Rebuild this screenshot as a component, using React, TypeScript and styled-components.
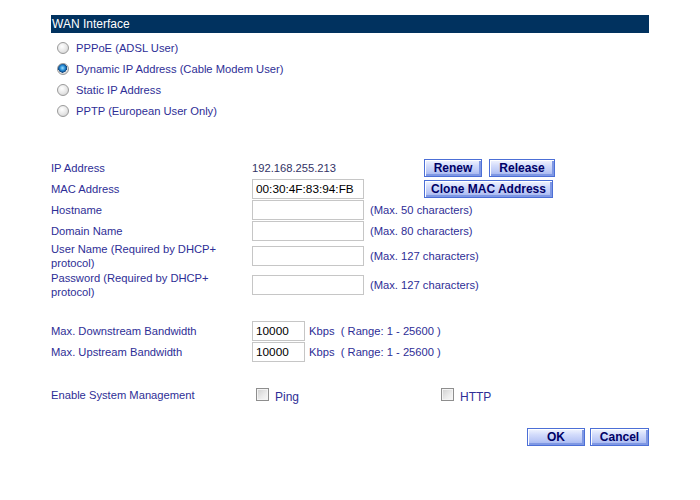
import React from 'react'
import styled, {createGlobalStyle} from 'styled-components'

const GlobalL = createGlobalStyle`
  body {
    margin: 0;
    background: #ffffff;
    font-family: "Liberation Sans", Arial, sans-serif;
    font-size: 11.2px;
    color: #2e2e96;
  }
`

const wanTypes = [
    {label: 'PPPoE (ADSL User)', checked: false},
    {label: 'Dynamic IP Address (Cable Modem User)', checked: true},
    {label: 'Static IP Address', checked: false},
    {label: 'PPTP (European User Only)', checked: false},
]

const textFields = [
    {label: 'Hostname', hint: '(Max. 50 characters)', tall: false},
    {label: 'Domain Name', hint: '(Max. 80 characters)', tall: false},
    {label: 'User Name (Required by DHCP+ protocol)', hint: '(Max. 127 characters)', tall: true},
    {label: 'Password (Required by DHCP+ protocol)', hint: '(Max. 127 characters)', tall: true},
]

export default function App() {
    return (
        <>
            <GlobalL/>
            <PageL>
                <HeaderL>WAN Interface</HeaderL>

                <RadioListL>
                    {wanTypes.map(t => (
                        <RadioRowL key={t.label}>
                            <RadioL type="radio" name="wan" defaultChecked={t.checked}/>
                            <span>{t.label}</span>
                        </RadioRowL>
                    ))}
                </RadioListL>

                <SectionL $top={36}>
                    <RowL>
                        <LabelL>IP Address</LabelL>
                        <ValueL>192.168.255.213</ValueL>
                        <ButtonsL $offset={54}>
                            <ButtonL $w={58}>Renew</ButtonL>
                            <ButtonL $w={66}>Release</ButtonL>
                        </ButtonsL>
                    </RowL>
                    <RowL>
                        <LabelL>MAC Address</LabelL>
                        <CellL><InputL $w={112} defaultValue="00:30:4F:83:94:FB"/></CellL>
                        <ButtonsL $offset={54}>
                            <ButtonL $w={129}>Clone MAC Address</ButtonL>
                        </ButtonsL>
                    </RowL>
                    {textFields.map(f => (
                        <RowL key={f.label} $tall={f.tall}>
                            <LabelL $narrow>{f.label}</LabelL>
                            <CellL><InputL $w={112}/></CellL>
                            <HintL>{f.hint}</HintL>
                        </RowL>
                    ))}
                </SectionL>

                <SectionL $top={21}>
                    <RowL>
                        <LabelL>Max. Downstream Bandwidth</LabelL>
                        <UnitCellL>
                            <InputL $w={53} defaultValue="10000"/>
                            <UnitL>Kbps&nbsp;&nbsp;( Range: 1 - 25600 )</UnitL>
                        </UnitCellL>
                    </RowL>
                    <RowL>
                        <LabelL>Max. Upstream Bandwidth</LabelL>
                        <UnitCellL>
                            <InputL $w={53} defaultValue="10000"/>
                            <UnitL>Kbps&nbsp;&nbsp;( Range: 1 - 25600 )</UnitL>
                        </UnitCellL>
                    </RowL>
                </SectionL>

                <SectionL $top={22}>
                    <ManageRowL>
                        <LabelL>Enable System Management</LabelL>
                        <CheckCellL $w={185}>
                            <CheckL type="checkbox"/>
                            <CheckTextL>Ping</CheckTextL>
                        </CheckCellL>
                        <CheckCellL>
                            <CheckL type="checkbox"/>
                            <CheckTextL>HTTP</CheckTextL>
                        </CheckCellL>
                    </ManageRowL>
                </SectionL>

                <FooterL>
                    <ButtonL $w={58}>OK</ButtonL>
                    <ButtonL $w={59}>Cancel</ButtonL>
                </FooterL>
            </PageL>
        </>
    )
}

// Styles
const PageL = styled.div`
  width: 598px;
  padding: 15px 0 0 51px;
`

const HeaderL = styled.div`
  height: 18px;
  line-height: 18px;
  padding-left: 1px;
  background-color: #01325f;
  color: #ffffff;
  font-size: 12px;
`

const RadioListL = styled.div`
  display: flex;
  flex-direction: column;
  margin-top: 4px;
  padding-left: 6px;
`

const RadioRowL = styled.label`
  display: flex;
  align-items: center;
  gap: 7px;
  height: 21px;
`

const RadioL = styled.input`
  appearance: none;
  width: 12px;
  height: 12px;
  margin: 0;
  border-radius: 50%;
  border: 1px solid #9a9a9a;
  background: radial-gradient(circle at 40% 35%, #ffffff 0%, #e6e6e6 55%, #c8c8c8 100%);

  &:checked {
    background:
      radial-gradient(circle at 45% 40%, #9fe0ff 0%, #2a8fd8 30%, #0a3f7a 55%, transparent 58%),
      radial-gradient(circle at 40% 35%, #ffffff 0%, #e6e6e6 55%, #c8c8c8 100%);
  }
`

const SectionL = styled.div<{ $top: number }>`
  display: flex;
  flex-direction: column;
  margin-top: ${({$top}) => $top}px;
`

const RowL = styled.div<{ $tall?: boolean }>`
  display: grid;
  grid-template-columns: 201px 118px 1fr;
  align-items: center;
  min-height: ${({$tall}) => ($tall ? 29 : 21)}px;
`

const LabelL = styled.div<{ $narrow?: boolean }>`
  max-width: ${({$narrow}) => ($narrow ? 175 : 201)}px;
  line-height: 14px;
`

const ValueL = styled.div`
  color: #333366;
`

const CellL = styled.div`
  display: flex;
  align-items: center;
`

const InputL = styled.input<{ $w: number }>`
  box-sizing: border-box;
  width: ${({$w}) => $w}px;
  height: 20px;
  margin: 0;
  padding: 0 3px;
  border: 1px solid #c6c6c6;
  font-family: "Liberation Sans", Arial, sans-serif;
  font-size: 11.8px;
  color: #000000;
  outline: none;
`

const HintL = styled.div`
  color: #2e2e96;
`

const ButtonsL = styled.div<{ $offset: number }>`
  display: flex;
  gap: 7px;
  padding-left: ${({$offset}) => $offset}px;
`

const ButtonL = styled.button<{ $w: number }>`
  box-sizing: border-box;
  width: ${({$w}) => $w}px;
  height: 18px;
  margin: 0;
  padding: 0;
  border: 1px solid #4c6fd6;
  background: linear-gradient(#f2f5ff 0%, #d3dcfb 35%, #bcc9f6 70%, #9fb2ee 100%);
  box-shadow: inset 1px 1px 0 #ffffff, inset -2px -2px 0 #7f98e4;
  font-family: "Liberation Sans", Arial, sans-serif;
  font-size: 12px;
  font-weight: bold;
  color: #000066;
  line-height: 16px;
  cursor: pointer;
`

const UnitCellL = styled.div`
  grid-column: 2 / 4;
  display: flex;
  align-items: center;
  gap: 4px;
`

const UnitL = styled.span`
  color: #2e2e96;
`

const ManageRowL = styled.div`
  display: flex;
  align-items: center;
  height: 21px;

  & > ${LabelL} {
    width: 201px;
  }
`

const CheckCellL = styled.label<{ $w?: number }>`
  display: flex;
  align-items: center;
  width: ${({$w}) => ($w ? `${$w}px` : 'auto')};
`

const CheckL = styled.input`
  appearance: none;
  box-sizing: border-box;
  width: 13px;
  height: 13px;
  margin: 0 6px 0 4px;
  border: 1px solid #8e8e8e;
  background: linear-gradient(135deg, #cfcfcf 0%, #ececec 60%, #f8f8f8 100%);
  box-shadow: inset 0 0 0 1px #f4f4f4;
`

const CheckTextL = styled.span`
  margin-top: 5px;
  font-size: 12px;
`

const FooterL = styled.div`
  display: flex;
  justify-content: flex-end;
  gap: 5px;
  margin-top: 23px;
`
